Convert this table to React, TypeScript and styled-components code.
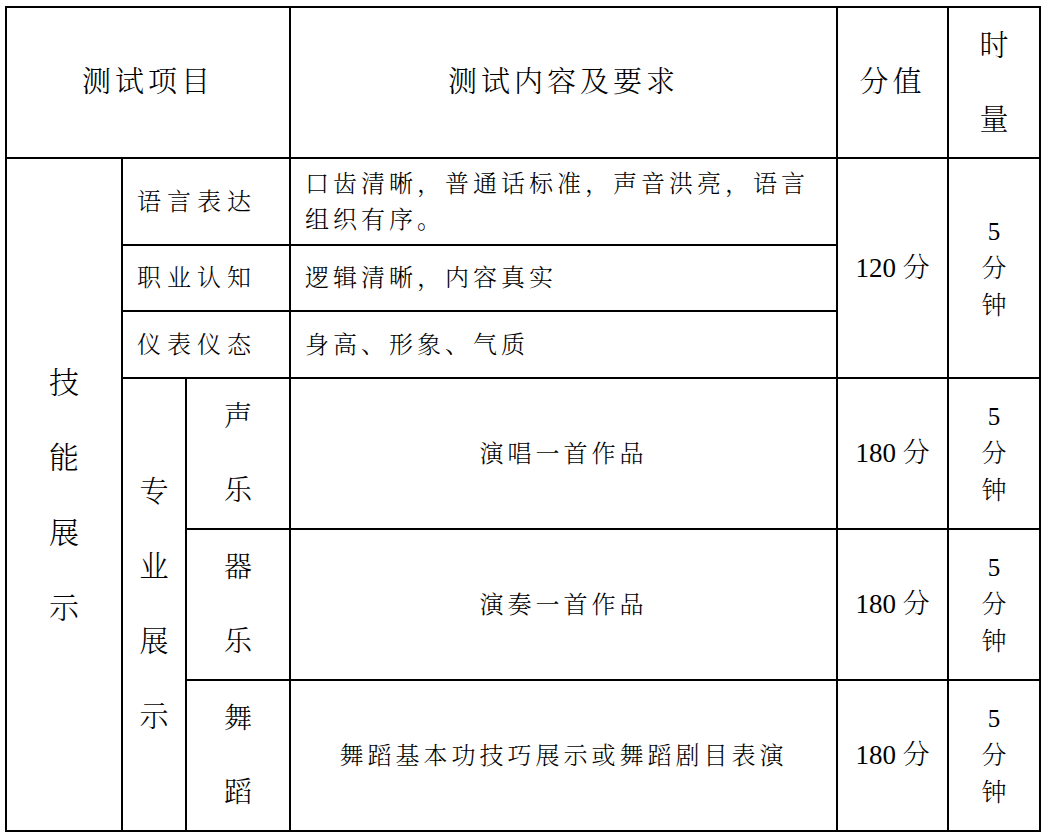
import styled, { createGlobalStyle } from 'styled-components';

const GlobalStyle = createGlobalStyle`
  html, body {
    margin: 0;
    padding: 0;
    background: #fff;
  }
  body {
    padding: 6px 5px;
    font-family: "Liberation Serif", "Noto Serif CJK SC", "Noto Sans CJK SC", serif;
    color: #000;
  }
`;

const Table = styled.table`
  width: 1034px;
  border-collapse: collapse;
  table-layout: fixed;
`;

const Row = styled.tr<{ $h: number }>`
  height: ${p => p.$h}px;
`;

// one cell of the grid, text alignment varies per use
const Cell = styled.td<{ $align?: 'left' | 'center' }>`
  border: 2px solid #000;
  padding: 0 14px;
  text-align: ${p => p.$align || 'center'};
  vertical-align: middle;
  font-weight: 300;
  font-size: 24px;
  line-height: 36px;
  letter-spacing: 4px;
`;

const HeadText = styled.span`
  font-size: 29px;
  letter-spacing: 4px;
`;

const Label = styled.span`
  letter-spacing: 6px;
`;

const Score = styled.span`
  font-size: 27px;
  letter-spacing: 0;
  white-space: nowrap;
`;

const Stack = styled.div<{ $step: number; $size?: number }>`
  display: flex;
  flex-direction: column;
  align-items: center;
  font-size: ${p => p.$size || 24}px;
  line-height: ${p => p.$step}px;
  letter-spacing: 0;
`;

function Vertical({ text, step, size }: { text: string; step: number; size?: number }) {
  return (
    <Stack $step={step} $size={size}>
      {text.split(' ').map((c, i) => <span key={i}>{c}</span>)}
    </Stack>
  );
}

const performRows = [
  { name: '声 乐', content: '演唱一首作品' },
  { name: '器 乐', content: '演奏一首作品' },
  { name: '舞 蹈', content: '舞蹈基本功技巧展示或舞蹈剧目表演' },
];

function App() {
  return (
    <>
      <GlobalStyle />
      <Table>
        <colgroup>
          <col style={{ width: 116 }} />
          <col style={{ width: 64 }} />
          <col style={{ width: 104 }} />
          <col style={{ width: 547 }} />
          <col style={{ width: 111 }} />
          <col style={{ width: 92 }} />
        </colgroup>
        <tbody>
          <Row $h={151}>
            <Cell colSpan={3}><HeadText>测试项目</HeadText></Cell>
            <Cell><HeadText>测试内容及要求</HeadText></Cell>
            <Cell><HeadText>分值</HeadText></Cell>
            <Cell><Vertical text="时 量" step={74} size={29} /></Cell>
          </Row>
          <Row $h={87}>
            <Cell rowSpan={6}><Vertical text="技 能 展 示" step={75} size={30} /></Cell>
            <Cell colSpan={2} $align="left"><Label>语言表达</Label></Cell>
            <Cell $align="left">口齿清晰，普通话标准，声音洪亮，语言组织有序。</Cell>
            <Cell rowSpan={3}><Score>120 分</Score></Cell>
            <Cell rowSpan={3}><Vertical text="5 分 钟" step={37} size={25} /></Cell>
          </Row>
          <Row $h={66}>
            <Cell colSpan={2} $align="left"><Label>职业认知</Label></Cell>
            <Cell $align="left">逻辑清晰，内容真实</Cell>
          </Row>
          <Row $h={67}>
            <Cell colSpan={2} $align="left"><Label>仪表仪态</Label></Cell>
            <Cell $align="left">身高、形象、气质</Cell>
          </Row>
          {performRows.map((r, i) => (
            <Row $h={151} key={r.name}>
              {i === 0 && (
                <Cell rowSpan={3}><Vertical text="专 业 展 示" step={75} size={29} /></Cell>
              )}
              <Cell><Vertical text={r.name} step={74} size={28} /></Cell>
              <Cell>{r.content}</Cell>
              <Cell><Score>180 分</Score></Cell>
              <Cell><Vertical text="5 分 钟" step={37} size={25} /></Cell>
            </Row>
          ))}
        </tbody>
      </Table>
    </>
  );
}

export default App;
